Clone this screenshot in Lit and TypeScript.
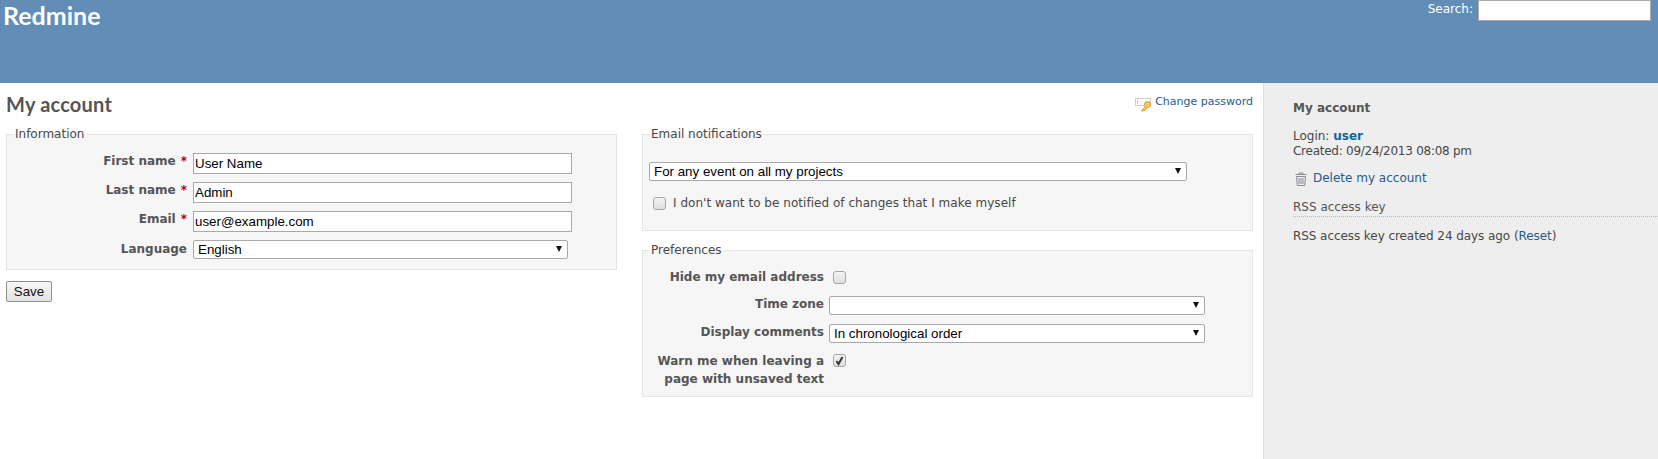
import { LitElement, html, css } from "lit";
import { customElement } from "lit/decorators.js";

@customElement("app-root")
export class AppRoot extends LitElement {
  static styles = css`
    :host { display: block; height: 459px; overflow: hidden; font: 12px/15px "DejaVu Sans", Verdana, sans-serif; color: #484848; background: #fff; }
    a { color: #2a5a8a; text-decoration: none; }
    .top { height: 83px; background: #628db6; color: #fff; display: flex; justify-content: space-between; align-items: flex-start; padding: 0 7px 0 3px; box-sizing: border-box; }
    .brand { margin: 0; font: bold 25px/30px "Lato", sans-serif; }
    .search { display: flex; gap: 5px; font-size: 12px; line-height: 19px; }
    .search input { width: 173px; height: 21px; }
    input[type="text"] { box-sizing: border-box; margin: 0; border: 1px solid #a9a9a9; background: #fff; padding: 1px; font: 13.33px "Liberation Sans", Arial, sans-serif; color: #000; display: block; }
    .main { display: flex; height: 376px; }
    .content { flex: 1; min-width: 0; padding: 0 10px 0 6px; }
    .titlebar { display: flex; justify-content: space-between; height: 44px; }
    h2 { margin: 9px 0 0; font: bold 20px/24px "Lato", sans-serif; letter-spacing: 0.2px; color: #555; }
    .contextual { display: flex; gap: 3px; height: 18px; margin-top: 10px; font-size: 11px; line-height: 18px; }
    .contextual svg { margin-top: 5px; }
    .split { display: grid; grid-template-columns: 1fr 1fr; gap: 25px; align-items: start; }
    fieldset { margin: 0; padding: 0 0 0 7px; border: 1px solid #e4e4e4; background: #f6f6f6; min-width: 0; display: block; }
    .stack { display: flex; flex-direction: column; gap: 12px; }
    legend { margin-left: -1px; padding: 0 2px; line-height: 15px; font-size: 12px; color: #484848; }
    .form { display: grid; row-gap: 8px; padding: 11px 0 10px; }
    .info { grid-template-columns: 173px 1fr; column-gap: 6px; }
    .info .lab { margin-top: 1px; }
    .info input[type="text"] { width: 379px; height: 21px; }
    .lab { text-align: right; font-weight: bold; color: #555; }
    .info .lang { margin-top: 2px; }
    .req { color: #bb0000; margin-left: 5px; font-weight: bold; }
    .sel { position: relative; display: block; box-sizing: border-box; height: 19px; border: 1px solid #a9a9a9; border-radius: 2px; background: #fff; font: 13.33px/17px "Liberation Sans", Arial, sans-serif; color: #000; padding-left: 4px; }
    .sel::after { content: ""; position: absolute; right: 5px; top: 5px; border: 3.5px solid transparent; border-top: 6px solid #111; border-bottom: 0; }
    .w374 { width: 375px; }
    .w538 { width: 538px; }
    .w376 { width: 376px; }
    .save { display: block; box-sizing: border-box; margin-top: 11px; width: 46px; height: 21px; padding: 0; border: 1px solid #8f8f8f; border-radius: 2px; background: linear-gradient(#f7f7f7, #e3e3e3); font: 13.33px "Liberation Sans", Arial, sans-serif; color: #111; }
    .cb { appearance: none; margin: 0; width: 13px; height: 13px; box-sizing: border-box; border: 1px solid #a6a6a6; border-radius: 3px; background: linear-gradient(#f4f4f4, #dedede); display: block; flex: none; position: relative; }
    .mail { height: 104px; box-sizing: border-box; padding: 20px 0 0 6px; }
    .mail legend { margin-left: 0; }
    .notify { display: flex; align-items: center; gap: 7px; margin: 15px 0 0 4px; letter-spacing: 0.03px; }
    .pref { grid-template-columns: 174px 1fr; grid-template-rows: 19px auto auto auto; column-gap: 5px; padding: 10px 0 8px; row-gap: 9px; }
    .pref .lab { line-height: 18px; }
    .pref .up { margin-top: -1px; }
    .pref .cb { margin: 3px 0 0 4px; }
    .pref .tick .cb { margin-top: 2px; }
    .tick { position: relative; width: 17px; height: 16px; }
    .tick svg { position: absolute; left: 4px; top: 2px; }
    aside { width: 395px; flex: none; box-sizing: border-box; border-left: 1px solid #ddd; background: #eee; padding: 18px 0 0 29px; }
    aside h3 { margin: 0; font-size: 12px; line-height: 15px; font-weight: bold; color: #555; }
    aside p { margin: 0; }
    .who { margin-top: 13px !important; }
    .who a { font-weight: bold; color: #169; }
    .tight { letter-spacing: -0.26px; }
    .del { display: flex; align-items: center; gap: 6px; margin: 12px 0 0 2px !important; height: 15px; }
    .rss { margin: 14px 0 0; font: 12px/15px "DejaVu Sans", sans-serif; font-weight: normal !important; border-bottom: 1px dotted #bbb; padding-bottom: 1px; }
    .rsstext { margin-top: 12px !important; letter-spacing: -0.07px; }
  `;

  render() {
    return html`
      <div class="top">
        <h1 class="brand">Redmine</h1>
        <label class="search">Search:<input type="text" /></label>
      </div>
      <div class="main">
        <div class="content">
          <div class="titlebar">
            <h2>My account</h2>
            <a class="contextual" href="#">
              <svg width="17" height="14" viewBox="0 0 17 14">
                <rect x="0.5" y="0.5" width="15" height="7" fill="#fcfcfc" stroke="#cfcfcf" />
                <path d="M2.5 2v3.5" stroke="#bbb" />
                <circle cx="12.5" cy="6.5" r="3" fill="#f5c862" stroke="#d99c2b" />
                <path d="M10.5 8.5 6.5 12.5 8 13.5 9 12.5 10 12.5 12 10" fill="#f5c862" stroke="#d99c2b" />
              </svg>
              Change password
            </a>
          </div>
          <div class="split">
            <div>
              <fieldset>
                <legend>Information</legend>
                <div class="form info">
                  <span class="lab">First name<span class="req">*</span></span>
                  <input type="text" value="User Name" />
                  <span class="lab">Last name<span class="req">*</span></span>
                  <input type="text" value="Admin" />
                  <span class="lab">Email<span class="req">*</span></span>
                  <input type="text" value="user@example.com" />
                  <span class="lab lang">Language</span>
                  <span class="sel w374">English</span>
                </div>
              </fieldset>
              <button class="save">Save</button>
            </div>
            <div class="stack">
              <fieldset class="mail">
                <legend>Email notifications</legend>
                <span class="sel w538">For any event on all my projects</span>
                <label class="notify"><input class="cb" type="checkbox" />I don't want to be notified of changes that I make myself</label>
              </fieldset>
              <fieldset>
                <legend>Preferences</legend>
                <div class="form pref">
                  <span class="lab">Hide my email address</span>
                  <input class="cb" type="checkbox" />
                  <span class="lab up">Time zone</span>
                  <span class="sel w376"></span>
                  <span class="lab up">Display comments</span>
                  <span class="sel w376">In chronological order</span>
                  <span class="lab">Warn me when leaving a<br />page with unsaved text</span>
                  <div class="tick">
                    <input class="cb" type="checkbox" checked />
                    <svg width="13" height="13" viewBox="0 0 13 13"><path d="M3.5 7 5.5 10 9.5 3" fill="none" stroke="#333" stroke-width="2" /></svg>
                  </div>
                </div>
              </fieldset>
            </div>
          </div>
        </div>
        <aside>
          <h3>My account</h3>
          <p class="who">Login: <a href="#">user</a><br /><span class="tight">Created: 09/24/2013 08:08 pm</span></p>
          <p class="del">
            <svg width="12" height="14" viewBox="0 0 12 14">
              <path d="M4 2V1h4v1M0.5 2.5h11M1.5 4.5h9l-.8 9H2.3zM4 6v6M6 6v6M8 6v6" fill="none" stroke="#8a8a93" />
            </svg>
            <a href="#">Delete my account</a>
          </p>
          <h3 class="rss">RSS access key</h3>
          <p class="rsstext">RSS access key created 24 days ago (<a href="#">Reset</a>)</p>
        </aside>
      </div>
    `;
  }
}
